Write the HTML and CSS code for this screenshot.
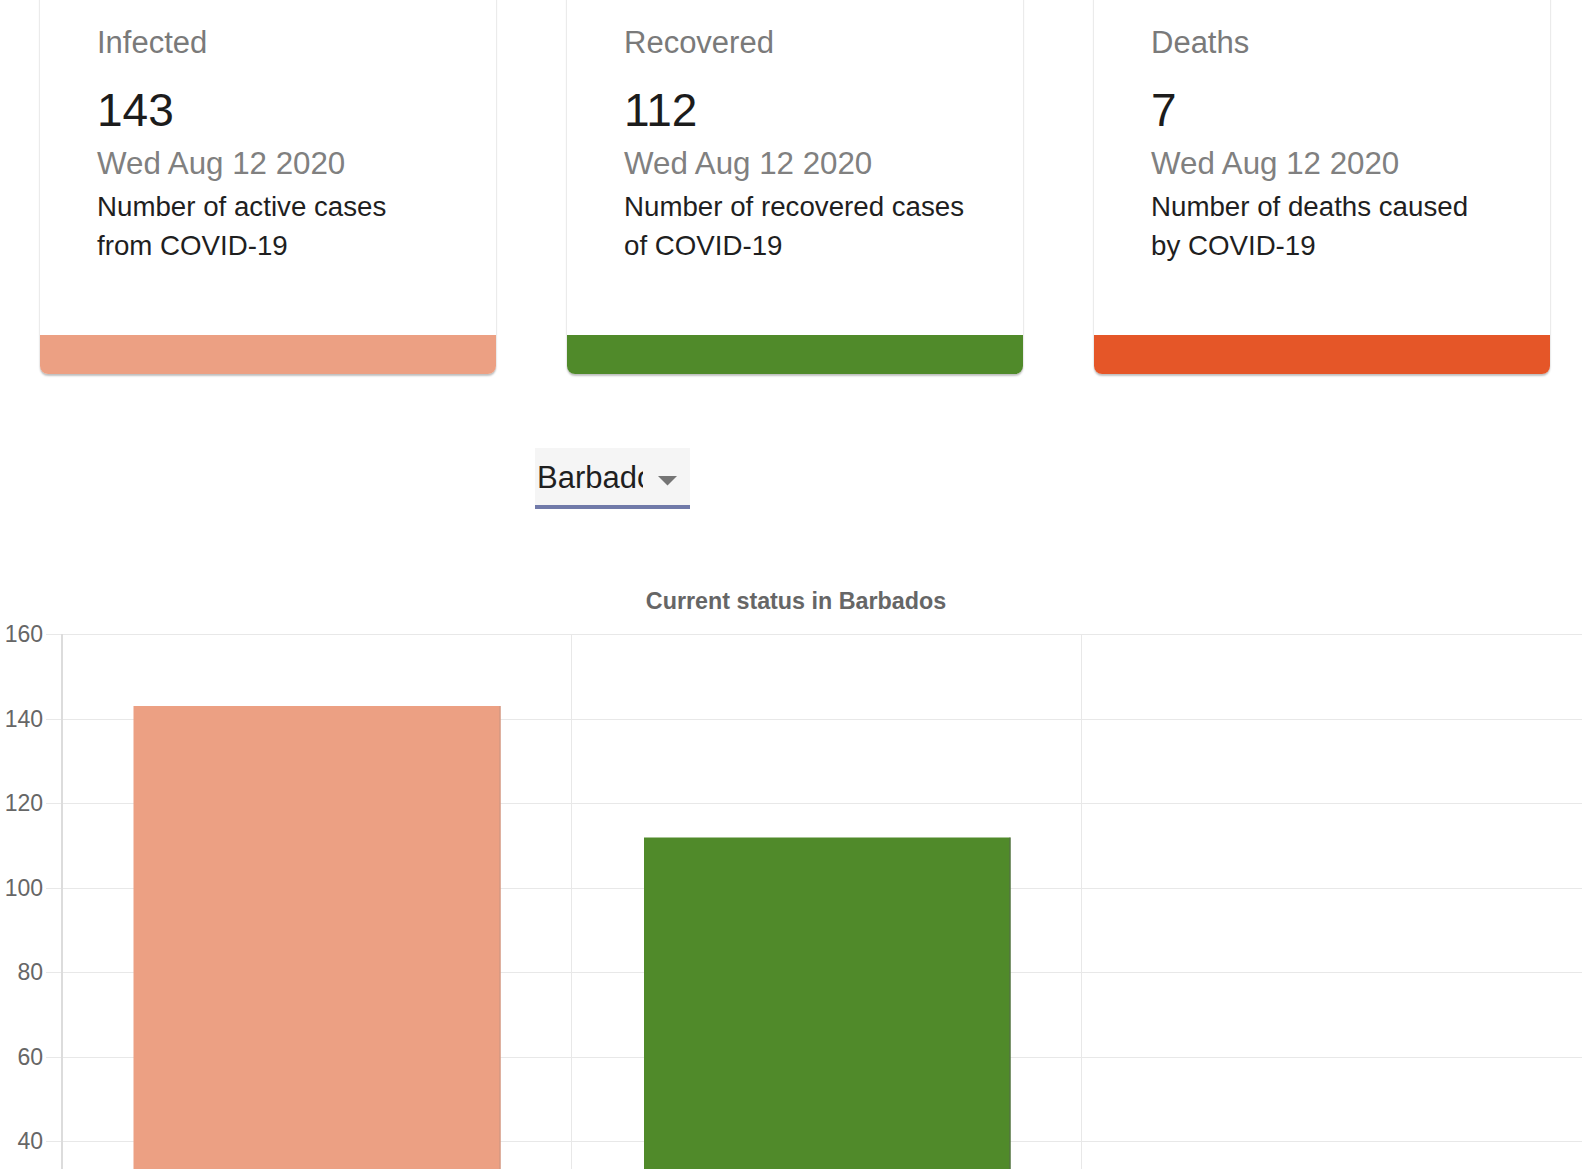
FILE: index.html
```html
<!DOCTYPE html>
<html lang="en">
<head>
<meta charset="utf-8">
<title>COVID-19 Tracker</title>
<link rel="stylesheet" href="styles.css">
</head>
<body>
<main class="page">
  <section class="cards">
    <article class="card">
      <div class="card-content">
        <p class="card-title">Infected</p>
        <p class="card-number">143</p>
        <p class="card-date">Wed Aug 12 2020</p>
        <p class="card-desc">Number of active cases<br>from COVID-19</p>
      </div>
      <div class="card-bar bar-infected"></div>
    </article>
    <article class="card">
      <div class="card-content">
        <p class="card-title">Recovered</p>
        <p class="card-number">112</p>
        <p class="card-date">Wed Aug 12 2020</p>
        <p class="card-desc">Number of recovered cases<br>of COVID-19</p>
      </div>
      <div class="card-bar bar-recovered"></div>
    </article>
    <article class="card">
      <div class="card-content">
        <p class="card-title">Deaths</p>
        <p class="card-number">7</p>
        <p class="card-date">Wed Aug 12 2020</p>
        <p class="card-desc">Number of deaths caused<br>by COVID-19</p>
      </div>
      <div class="card-bar bar-deaths"></div>
    </article>
  </section>

  <section class="picker">
    <div class="select" role="combobox" aria-label="Country">
      <span class="select-value">Barbados</span>
      <svg class="select-arrow" width="19" height="10" viewBox="0 0 19 10" aria-hidden="true">
        <path d="M0 0 L19 0 L9.5 9.5 Z" fill="#757575"/>
      </svg>
    </div>
  </section>

  <section class="chart">
    <svg class="chart-svg" width="1582" height="610" viewBox="0 0 1582 610">
      <text class="chart-title" x="796" y="49.5" text-anchor="middle">Current status in Barbados</text>

      <g class="grid">
        <line x1="46" y1="75.5" x2="1591" y2="75.5"/>
        <line x1="46" y1="160.5" x2="1591" y2="160.5"/>
        <line x1="46" y1="244.5" x2="1591" y2="244.5"/>
        <line x1="46" y1="329.5" x2="1591" y2="329.5"/>
        <line x1="46" y1="413.5" x2="1591" y2="413.5"/>
        <line x1="46" y1="498.5" x2="1591" y2="498.5"/>
        <line x1="46" y1="582.5" x2="1591" y2="582.5"/>
        <line x1="571.5" y1="75" x2="571.5" y2="610"/>
        <line x1="1081.5" y1="75" x2="1081.5" y2="610"/>
      </g>
      <line class="axis" x1="62" y1="75" x2="62" y2="610"/>

      <g class="ticks">
        <text x="43" y="75">160</text>
        <text x="43" y="160">140</text>
        <text x="43" y="244">120</text>
        <text x="43" y="329">100</text>
        <text x="43" y="413">80</text>
        <text x="43" y="498">60</text>
        <text x="43" y="582">40</text>
      </g>

      <rect class="bar-a" x="133.5" y="147" width="367" height="470"/>
      <line class="bar-a-edge" x1="500" y1="147" x2="500" y2="610"/>
      <rect class="bar-b" x="644" y="278.5" width="366.5" height="340"/>
      <line class="bar-b-edge" x1="1010" y1="278.5" x2="1010" y2="610"/>
    </svg>
  </section>
</main>
</body>
</html>
```

FILE: styles.css
```css
html, body {
  margin: 0;
  padding: 0;
  background: #ffffff;
  overflow: hidden;
}

.page {
  font-family: "Liberation Sans", Arial, Helvetica, sans-serif;
  height: 1170px;
  overflow: hidden;
}

.cards {
  display: grid;
  grid-template-columns: 456px 456px 456px;
  column-gap: 71px;
  margin: -12px 0 0 40px;
}

.card {
  background: #ffffff;
  border-radius: 8px;
  overflow: hidden;
  box-shadow: 0 0 1px rgba(0, 0, 0, 0.18), 0 2px 2px rgba(0, 0, 0, 0.24);
  display: flex;
  flex-direction: column;
}

.card-content {
  padding: 32px 20px 70px 57px;
}

.card-content p {
  margin: 0;
}

.card-title {
  font-size: 31px;
  line-height: 46px;
  color: #7a7a7a;
  margin-bottom: 14px !important;
}

.card-number {
  font-size: 46px;
  line-height: 60px;
  color: #1c1c1c;
}

.card-date {
  font-size: 31.3px;
  line-height: 46px;
  color: #808080;
  padding-top: 1px;
}

.card-desc {
  font-size: 27.7px;
  line-height: 38.7px;
  color: #1f1f1f;
  margin-top: 1px !important;
}

.card-bar {
  height: 39px;
}

.bar-infected { background: #eca083; }
.bar-recovered { background: #508a2a; }
.bar-deaths { background: #e55628; }

.picker {
  margin: 74px 0 0 535px;
}

.select {
  box-sizing: border-box;
  width: 155px;
  height: 61px;
  background: #f5f5f5;
  border-bottom: 4px solid #717aa9;
  display: flex;
  align-items: flex-start;
  padding: 12px 0 0 2px;
}

.select-value {
  display: block;
  width: 106px;
  overflow: hidden;
  white-space: nowrap;
  font-size: 31px;
  line-height: 36px;
  color: #1f1f1f;
}

.select-arrow {
  margin: 16px 0 0 15px;
  flex: none;
}

.chart {
  margin-top: 50px;
}

.chart-svg {
  display: block;
  font-family: "Liberation Sans", Arial, Helvetica, sans-serif;
}

.chart-title {
  font-size: 23.3px;
  font-weight: bold;
  fill: #666666;
}

.grid line {
  stroke: #e8e8e8;
  stroke-width: 1;
}

.axis {
  stroke: #dcdcdc;
  stroke-width: 2;
}

.ticks text {
  font-size: 23px;
  fill: #666666;
  text-anchor: end;
  dominant-baseline: central;
}

.bar-a { fill: #eca083; }
.bar-a-edge { stroke: #c99480; stroke-width: 1; }
.bar-b { fill: #508a2a; }
.bar-b-edge { stroke: #55694a; stroke-width: 1; }
```
